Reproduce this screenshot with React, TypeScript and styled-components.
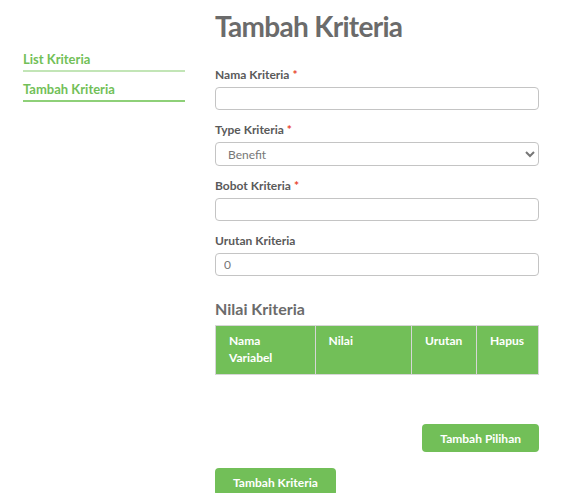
import React from 'react';
import styled, { createGlobalStyle } from 'styled-components';

const GlobalStyle = createGlobalStyle`
  body {
    margin: 0;
    background: #ffffff;
    font-family: Lato, "Open Sans", sans-serif;
    color: #555555;
  }
`;

const green = '#72bf58';

const Page = styled.div`
  display: flex;
  align-items: flex-start;
`;

const Sidebar = styled.nav`
  display: flex;
  flex-direction: column;
  width: 162px;
  margin-left: 23px;
  margin-top: 42px;
`;

const SideLink = styled.a<{ $active?: boolean }>`
  display: block;
  padding: 8px 0 2px;
  font-size: 13px;
  font-weight: 700;
  color: ${green};
  text-decoration: none;
  border-bottom: 2px solid ${(p) => (p.$active ? '#8ed078' : '#c2e5b6')};
  line-height: 18px;
`;

const Main = styled.main`
  width: 324px;
  margin-left: 30px;
  display: flex;
  flex-direction: column;
`;

const Title = styled.h1`
  margin: 8px 0 23px;
  font-size: 28px;
  line-height: 36px;
  letter-spacing: -0.7px;
  font-weight: 700;
  color: #6b6b6b;
`;

const Field = styled.div`
  display: flex;
  flex-direction: column;
  margin-bottom: 12px;
`;

const Label = styled.label`
  font-size: 12px;
  font-weight: 700;
  line-height: 16px;
  color: #5a5a5a;
  margin-bottom: 4px;
`;

const Required = styled.span`
  color: #e8432d;
  margin-left: 3px;
`;

const Input = styled.input`
  box-sizing: border-box;
  height: 23px;
  width: 100%;
  padding: 0 8px;
  border: 1px solid #c4c4c4;
  border-radius: 4px;
  font-family: inherit;
  font-size: 12px;
  color: #777777;
  background: #fff;
`;

const Select = styled.select`
  box-sizing: border-box;
  height: 24px;
  width: 100%;
  padding: 0 8px;
  border: 1px solid #c4c4c4;
  border-radius: 4px;
  font-family: inherit;
  font-size: 12px;
  color: #777777;
  background: #fff;
`;

const SubTitle = styled.h2`
  margin: 11px 0 6px;
  font-size: 16px;
  line-height: 20px;
  font-weight: 700;
  color: #6b6b6b;
`;

const Table = styled.table`
  width: 100%;
  border-collapse: collapse;
  margin-bottom: 49px;
`;

const Th = styled.th<{ $w: number }>`
  width: ${(p) => p.$w}px;
  height: 49px;
  box-sizing: border-box;
  padding: 6px 13px;
  background: ${green};
  border: 1px solid #d6d6d6;
  color: #ffffff;
  font-size: 12px;
  font-weight: 700;
  line-height: 17px;
  text-align: left;
  vertical-align: top;
`;

const Button = styled.button<{ $align?: 'end' | 'start' }>`
  align-self: ${(p) => (p.$align === 'end' ? 'flex-end' : 'flex-start')};
  height: 28px;
  padding: 0 18px;
  border: none;
  border-radius: 4px;
  background: ${green};
  color: #ffffff;
  font-family: inherit;
  font-size: 12px;
  font-weight: 700;
  margin-bottom: 16px;
`;

export default function App() {
  return (
    <Page>
      <GlobalStyle />
      <Sidebar>
        <SideLink href="#">List Kriteria</SideLink>
        <SideLink href="#" $active>Tambah Kriteria</SideLink>
      </Sidebar>
      <Main>
        <Title>Tambah Kriteria</Title>
        <Field>
          <Label>Nama Kriteria<Required>*</Required></Label>
          <Input />
        </Field>
        <Field>
          <Label>Type Kriteria<Required>*</Required></Label>
          <Select defaultValue="benefit">
            <option value="benefit">Benefit</option>
            <option value="cost">Cost</option>
          </Select>
        </Field>
        <Field>
          <Label>Bobot Kriteria<Required>*</Required></Label>
          <Input />
        </Field>
        <Field>
          <Label>Urutan Kriteria</Label>
          <Input defaultValue="0" />
        </Field>
        <SubTitle>Nilai Kriteria</SubTitle>
        <Table>
          <thead>
            <tr>
              <Th $w={100}>Nama Variabel</Th>
              <Th $w={97}>Nilai</Th>
              <Th $w={65}>Urutan</Th>
              <Th $w={62}>Hapus</Th>
            </tr>
          </thead>
        </Table>
        <Button $align="end">Tambah Pilihan</Button>
        <Button>Tambah Kriteria</Button>
      </Main>
    </Page>
  );
}
